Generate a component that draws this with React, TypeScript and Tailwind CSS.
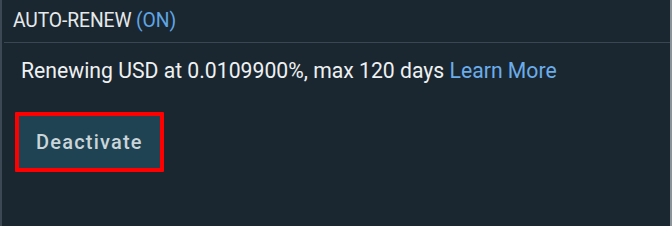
import React from 'react';

const App: React.FC = () => {
  return (
    <div
      className="w-[672px] h-[226px] bg-[#1b2730] border-l-2 border-l-[#3c4853] border-r-2 border-r-[#8c949a] flex flex-col"
      style={{ fontFamily: 'Roboto, "Liberation Sans", sans-serif' }}
    >
      {/* Header */}
      <div className="h-[43px] border-b border-[#3a4651] flex items-center pl-[9px] ml-[2px]">
        <span className="text-[19.3px] text-[#e6e9eb] tracking-[-0.1px]">
          AUTO-RENEW <span className="text-[#5fa6e6]">(ON)</span>
        </span>
      </div>

      {/* Body */}
      <div className="pl-[19px] pt-[13px]">
        <p className="text-[21.2px] text-[#eef1f2] leading-[30px]">
          Renewing USD at 0.0109900%, max 120 days{' '}
          <a className="text-[#6badea] cursor-pointer">Learn More</a>
        </p>
        <div className="mt-[26px] -ml-[6px] inline-block border-[4px] border-[#ff0000] rounded-[1px]">
          <button className="h-[52px] px-[17px] bg-[#1f4352] text-[#c9d5da] text-[20px] font-medium tracking-[1.2px]">
            Deactivate
          </button>
        </div>
      </div>
    </div>
  );
};

export default App;
